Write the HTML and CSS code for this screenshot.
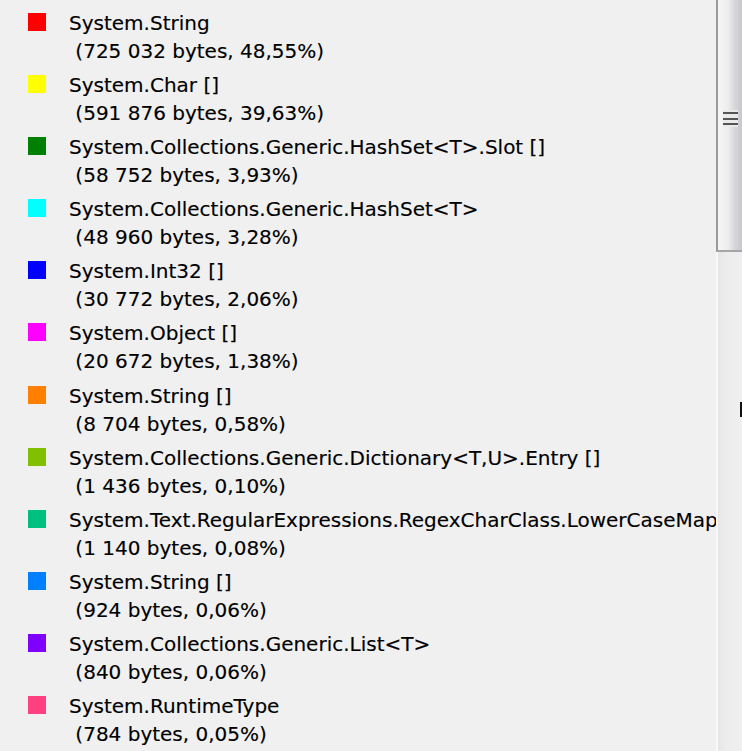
FILE: index.html
```html
<!DOCTYPE html>
<html>
<head>
<meta charset="utf-8">
<link rel="stylesheet" href="styles.css">
</head>
<body>
<div class="frame">
  <div class="legend">
    <div class="item"><span class="swatch c1"></span><div class="label"><div class="name">System.String</div><div class="detail">&nbsp;(725 032 bytes, 48,55%)</div></div></div>
    <div class="item"><span class="swatch c2"></span><div class="label"><div class="name">System.Char []</div><div class="detail">&nbsp;(591 876 bytes, 39,63%)</div></div></div>
    <div class="item"><span class="swatch c3"></span><div class="label"><div class="name">System.Collections.Generic.HashSet&lt;T&gt;.Slot []</div><div class="detail">&nbsp;(58 752 bytes, 3,93%)</div></div></div>
    <div class="item"><span class="swatch c4"></span><div class="label"><div class="name">System.Collections.Generic.HashSet&lt;T&gt;</div><div class="detail">&nbsp;(48 960 bytes, 3,28%)</div></div></div>
    <div class="item"><span class="swatch c5"></span><div class="label"><div class="name">System.Int32 []</div><div class="detail">&nbsp;(30 772 bytes, 2,06%)</div></div></div>
    <div class="item"><span class="swatch c6"></span><div class="label"><div class="name">System.Object []</div><div class="detail">&nbsp;(20 672 bytes, 1,38%)</div></div></div>
    <div class="item"><span class="swatch c7"></span><div class="label"><div class="name">System.String []</div><div class="detail">&nbsp;(8 704 bytes, 0,58%)</div></div></div>
    <div class="item"><span class="swatch c8"></span><div class="label"><div class="name">System.Collections.Generic.Dictionary&lt;T,U&gt;.Entry []</div><div class="detail">&nbsp;(1 436 bytes, 0,10%)</div></div></div>
    <div class="item"><span class="swatch c9"></span><div class="label"><div class="name">System.Text.RegularExpressions.RegexCharClass.LowerCaseMapping []</div><div class="detail">&nbsp;(1 140 bytes, 0,08%)</div></div></div>
    <div class="item"><span class="swatch c10"></span><div class="label"><div class="name">System.String []</div><div class="detail">&nbsp;(924 bytes, 0,06%)</div></div></div>
    <div class="item"><span class="swatch c11"></span><div class="label"><div class="name">System.Collections.Generic.List&lt;T&gt;</div><div class="detail">&nbsp;(840 bytes, 0,06%)</div></div></div>
    <div class="item"><span class="swatch c12"></span><div class="label"><div class="name">System.RuntimeType</div><div class="detail">&nbsp;(784 bytes, 0,05%)</div></div></div>
  </div>
  <div class="scrollbar">
    <div class="thumb"><div class="grip"><span></span><span></span><span></span></div></div>
    <div class="track"><span class="mark"></span></div>
  </div>
</div>
</body>
</html>
```

FILE: styles.css
```css
html, body {
  margin: 0;
  padding: 0;
  background: #f0f0f0;
  overflow: hidden;
}
.frame {
  display: flex;
  width: 742px;
  height: 751px;
  overflow: hidden;
}
.legend {
  width: 716px;
  flex: none;
  overflow: hidden;
  padding-top: 9px;
  box-sizing: border-box;
  font-family: "DejaVu Sans", Verdana, sans-serif;
  font-size: 20px;
  color: #000;
  -webkit-text-stroke: 0.15px #000;
}
.item {
  display: flex;
  height: 62.1px;
  padding-left: 28px;
  box-sizing: border-box;
}
.swatch {
  flex: none;
  width: 18px;
  height: 18px;
  margin-top: 4px;
  margin-right: 23px;
}
.label {
  white-space: nowrap;
}
.name, .detail {
  line-height: 28px;
  height: 28px;
}
.c1 { background: #ff0000; }
.c2 { background: #ffff00; }
.c3 { background: #008000; }
.c4 { background: #00ffff; }
.c5 { background: #0000ff; }
.c6 { background: #ff00ff; }
.c7 { background: #ff8000; }
.c8 { background: #80c000; }
.c9 { background: #00c080; }
.c10 { background: #0080ff; }
.c11 { background: #8000ff; }
.c12 { background: #ff4080; }

.scrollbar {
  width: 26px;
  flex: none;
  display: flex;
  flex-direction: column;
  position: relative;
}
.thumb {
  height: 252px;
  flex: none;
  box-sizing: border-box;
  border-left: 2px solid #9a9a9a;
  border-bottom: 2px solid #a6a6a6;
  background: linear-gradient(to right, #f6f6f6 0%, #eeeeee 40%, #d6d6da 70%, #c8c8cc 100%);
  display: flex;
  justify-content: center;
  padding-top: 110px;
}
.grip {
  width: 15px;
  height: 17px;
  display: flex;
  flex-direction: column;
  justify-content: space-between;
  padding: 2px 0;
  box-sizing: border-box;
  background: #eaeaea;
}
.grip span {
  display: block;
  height: 2px;
  background: #555;
}
.track {
  flex: 1;
  position: relative;
  border-left: 2px solid #f8f8f8;
  background: linear-gradient(to right, #e6e6e6 0%, #ececec 30%, #f0f0f0 100%);
}
.mark {
  position: absolute;
  right: 0;
  top: 150px;
  width: 2px;
  height: 15px;
  background: #111;
}
```
